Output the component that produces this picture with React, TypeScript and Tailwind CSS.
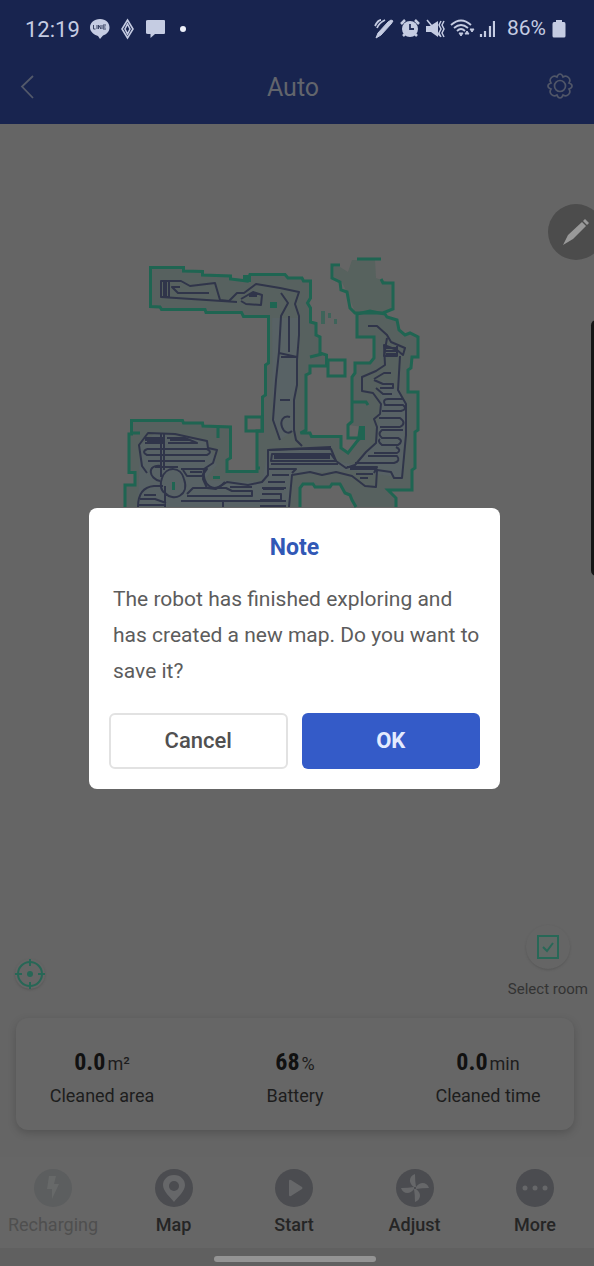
import type { ReactNode } from "react";

const FLOOR =
  "M150.500 267.500H183.500V271L202.500 271.500V275L230.500 276V279L247.500 281L250 274.500L285 274.500L288 278H302L303.500 281H310.500V298L307.500 303L310.500 308V322L316 323.500V335L320 337V353L326.500 355V366H310V373L306 375V430L300.500 433H310L311.500 436.500H341V448L348 453L356.500 442L364 438V427L348 425L352 421.500V377L355 373V363H370L374 358V337H357V314H385L387 317L397 320L399 330L405 335H418V357H412L411 368L408 370V392H418V430L415 432V468L412 470V490H388L396 498V507H355L352 500L350 495L345 493L340 484H332L330 487H315L313 484H303L300 488V507H125V485H135V472.500H129V434H131.500V420.500H182.500L183.500 423H202.500L203 426L230.500 427V458L227 460V471H256.500V431H262.500V397L265.500 395V365L268.500 363V316.500H243.500L241.500 312.500H206L205 309.500H161.500L160 307L150.500 306.500Z";

const WALLS = [
  "M356 507L352 500L350 495L345 493L340 484H332L330 487H315L313 484H303L300 488V507",
  "M125 507V485H135V472.500H129V434H131.500V420.500H182.500L183.500 423H202.500L203 426L230.500 427V458L227 460V471.500H257V468H260M257 471V431H262.500V397L265.500 395V365L268.500 363V316.500H243.500L241.500 312.500H206L205 309.500H161.500L160 307L150.500 306.500V267.500H183.500V271L202.500 271.500V275L230.500 276V279L247.500 281L250 274.500H285L288 278H302L303.500 281H310.500V298L307.500 303L310.500 308V322L316 323.500V335L320 337V353L326.500 355V366H310V373L306 375V430L300.500 433H310L311.500 436.500H341V448L348 453L356.500 442L360 438H348V425L352 421.500V377L355 373V363H370L374 358V337H357V314L370 311L385 314L387 317L397 320L399 330L405 335L410 333L418 337V357H412L411 368L408 370V392H418V430L415 432V468L412 470V490H388L396 498V507",
  "M131.500 433H140M218 427V438M352 402H366L368 405",
  "M340 265H332V278L340 282L341 290L347 292L350 308L355 313H383L393 309V283H383L381 279",
  "M357 259H381",
  "M328 360H345V376H328ZM246 417H262V431H246ZM310 357L322 354",
];

const TRACKS = [
  "M161 281H169V297H161ZM164 281V297M166 281V297",
  "M162 281L181 281L190 286L215 283L220 300L229 301L237 293L244 293L256 284L280 288L299 292L295 304L299 316V335L297 360L297 385L294 400V430L296 440L302 446",
  "M161 297L237 302M241 301L246 304L261 305L262 295L253 292L241 299M249 296H257M250 294H258M209 293H178L172 287L180 287",
  "M281 293L288 303L281 316L279 352L276 380L273 420L280 440M289 316V352M279 353L297 357M281 357H296M280 400H290M290 417C283 415 280 421 282 427C284 433 289 434 292 431",
  "M368 326H377L387 335L391 342L405 348L403 355L397 350L384 345L385 365L376 371L362 377V391L373 393L381 404L380 414L374 419L377 427L376 443L366 452L355 465L346 468L336 461L331 449H300L268 450V475L262 482L248 485L227 482L216 489L207 488L203 479L204 469L213 463L217 450L208 448L207 441L193 438L175 434L148 433L139 445L142 466L147 473",
  "M387 338L384 356H397V346M384 348H398M385 351H398M386 354H398M400 356L398 390L406 404V435L402 478H394L391 472L377 470L376 487L365 486L352 476L336 472L322 475L310 472L292 475L289 507",
  "M374 379L384 373H391M374 380L383 384H393V388H380M376 388L383 394H392M403 399H388Q382 399 385 405H403Q408 409 401 411H382M379 418H400Q407 423 400 427H380M403 430H382Q377 434 382 438H398Q404 441 398 445H382Q377 441 380 439M374 453H397Q402 450 396 447M368 456H397Q401 461 394 463H355M350 469H376M356 474H373M360 478H368M347 467H377L374 473",
  "M272 454H331L336 461H271ZM274 456H330M274 458H330M271 464H338M269 469H296L292 473M272 475H289M268 482H285M262 488H286M262 494H281V500H260M260 506H286M268 450L331 447",
  "M145 438H163V443H145M145 440H162M147 442H162M161 433V477M164 433V470M167 438H185L197 443H168M170 440H190M147 449H207Q213 452 207 455H147Q141 452 147 449M148 461H205M155 467H178M181 469H207L202 476H187L183 470M190 472H202",
  "M161 466C146 464 149 479 160 481M162 478C166 466 181 466 184 479C190 496 173 502 165 493C160 490 160 483 162 478M204 469C202 486 214 494 225 482M138 507C138 494 143 487 154 486H163M140 499H155L166 503M144 495H156M138 505H164M165 486V507",
  "M187 494L193 488H226L232 491H252V496H187M181 501H286M223 501V507M230 487H252M263 489H284",
];

function Pin({ children, faded = false }: { children: ReactNode; faded?: boolean }) {
  return (
    <svg viewBox="0 0 38 38" className={faded ? "size-[38px] text-[#5c5e5f]" : "size-[38px] text-[#4b4c50]"} aria-hidden="true">
      <circle cx="19" cy="19" r="19" fill="currentColor" />
      {children}
    </svg>
  );
}

function StatusBar() {
  return (
    <div className="flex h-[58px] items-center justify-between pr-7 pl-[25px] text-[#c5cce2]">
      <div className="flex items-center">
        <span className="text-[22px]">12:19</span>
        <svg viewBox="0 0 100 24" className="ml-2 h-6 w-[100px]" aria-hidden="true">
          <path d="M12 2C6 2 2 6 2 10.500C2 15.500 7 18 10 19L12 22L15 18.500C18 17.500 21.500 15 21.500 10.500C21.500 6 18 2 12 2Z" fill="currentColor" />
          <path d="M5.500 8V12H7.500M9 8V12M10.500 12V8L13 12V8M18 8H15V12H18M15 10H17.500" stroke="#3b4565" strokeWidth="1" fill="none" />
          <path d="M39.500 3L45 12L39.500 21L34 12ZM39.500 7L42 12L39.500 17L37 12Z" stroke="currentColor" strokeWidth="1.600" fill="none" />
          <path d="M60 3H76Q77 3 77 4V16Q77 17 76 17H67L62.500 21V17H60Q58 17 58 16V4Q58 3 60 3Z" fill="currentColor" />
          <circle cx="95" cy="12" r="3" fill="#eef1fa" />
        </svg>
      </div>
      <div className="flex items-center">
        <svg viewBox="0 0 122 24" className="h-6 w-[122px]" aria-hidden="true" fill="none" stroke="currentColor">
          <path d="M3 21L5 16L15 5L18 3L20 4L18 7L8 18Z" fill="currentColor" />
          <path d="M2 9Q5 3 8 3M4 11Q6 6 12 3" strokeWidth="1.800" />
          <path d="M30 19L32 17M44 19L42 17M28 7L32 3M46 7L42 3" strokeWidth="2.500" />
          <circle cx="37" cy="12" r="8" fill="currentColor" stroke="none" />
          <path d="M37 7V12H41" stroke="#26325c" strokeWidth="1.800" />
          <path d="M53 9H57L65 4V20L58 15H53Z" fill="currentColor" stroke="none" />
          <path d="M54 3L67 19" strokeWidth="1.500" />
          <path d="M68 4L66 8L68 12L66 16L68 20M71 4L69 8L71 12L69 16L71 20" strokeWidth="1.500" />
          <path d="M78 8Q88 -1 98 8M81 11Q88 5 95 11M84 14Q88 10 92 14" strokeWidth="1.800" />
          <path d="M86 16L88 19L90 16Z" fill="currentColor" strokeWidth="1" />
          <path d="M92 17L94 14L96 17ZM97 12H101L99 15Z" fill="currentColor" strokeWidth="1" />
          <path d="M108 20V17M112 20V14M117 20V9M121 20V4" strokeWidth="2.200" />
        </svg>
        <span className="ml-3 text-[21px]">86%</span>
        <svg viewBox="0 0 14 20" className="ml-1.5 h-5 w-3.5" aria-hidden="true">
          <path d="M4 1H10V3H12Q13.500 3 13.500 5V17Q13.500 18.500 12 18.500H2Q.5 18.500 .5 17V5Q.5 3 2 3H4Z" fill="currentColor" />
        </svg>
      </div>
    </div>
  );
}

function TitleBar() {
  return (
    <div className="flex h-[66px] items-start justify-between pt-3 pr-5 pl-4">
      <button type="button" aria-label="Back" className="flex h-8 w-6 items-center text-[#53596a]">
        <svg viewBox="0 0 24 32" className="h-8 w-6" aria-hidden="true">
          <path d="M17 6L6 16.500L17 28" fill="none" stroke="currentColor" strokeWidth="1.800" />
        </svg>
      </button>
      <h1 className="text-[25px] leading-9 text-[#62656c]">Auto</h1>
      <button type="button" aria-label="Settings" className="flex h-8 items-center text-[#505668]">
        <svg viewBox="0 0 28 28" className="size-7" aria-hidden="true" fill="none" stroke="currentColor" strokeWidth="1.700">
          <path d="M14 2Q16 2 17 5Q20 3 22.500 5.500Q25 8 23 11Q26 12 26 14Q26 16 23 17Q25 20 22.500 22.500Q20 25 17 23Q16 26 14 26Q12 26 11 23Q8 25 5.500 22.500Q3 20 5 17Q2 16 2 14Q2 12 5 11Q3 8 5.500 5.500Q8 3 11 5Q12 2 14 2Z" />
          <circle cx="14" cy="14" r="5.500" />
        </svg>
      </button>
    </div>
  );
}

function FloorMap() {
  return (
    <svg viewBox="0 124 594 384" className="block w-full" role="img" aria-label="Explored floor map">
      <path d={FLOOR} fill="#57615f" />
      <path d="M340 267L348 272L352 260H375L376 278L393 284V308L383 312H355L347 292L341 281L334 277V267Z" fill="#57625e" />
      <path d="M272 318L299 318L297 380L294 430L280 440L273 420ZM268 450H331L336 461L355 465L377 440L382 380L398 390L406 404L402 478L350 470L292 475L288 507H138L140 445L155 433L207 441L217 465L204 480L262 482Z" fill="#586265" />
      <g fill="none" stroke="#30354a" strokeWidth="2" strokeLinejoin="round">
        {TRACKS.map((d) => <path key={d} d={d} />)}
      </g>
      <g fill="none" stroke="#1f6552" strokeWidth="3">
        {WALLS.map((d) => <path key={d} d={d} />)}
      </g>
      <g fill="#1f6552">
        <path d="M359 426H365V440H357ZM243 275H251V282H243ZM270 302H277V308H270Z" />
        <path d="M321 311H325V324H321ZM328 313H331V318H328ZM334 319H337V324H334Z" opacity=".55" />
        <path d="M172 482H175V490H172ZM213 476H220V479H213Z" />
      </g>
    </svg>
  );
}

function Stat({ value, unit, label }: { value: string; unit: string; label: string }) {
  return (
    <div className="flex w-28 flex-col items-center text-[#1d1d1d]">
      <dd className="flex items-baseline gap-0.5 leading-8">
        <span className="font-['Liberation_Sans_Narrow','Roboto_Condensed',Roboto,sans-serif] text-2xl leading-8 font-bold text-[#111]">{value}</span>
        <span className="text-lg leading-8">{unit}</span>
      </dd>
      <dt className="order-last text-lg leading-8">{label}</dt>
    </div>
  );
}

function NavItem({ label, icon, disabled = false }: { label: string; icon: ReactNode; disabled?: boolean }) {
  return (
    <button
      type="button"
      disabled={disabled}
      className="flex w-[90px] flex-col items-center gap-1.5 text-[18px] leading-6 font-medium text-[#252525] disabled:font-normal disabled:text-[#4f4f4f]"
    >
      {icon}
      {label}
    </button>
  );
}

function NoteDialog() {
  return (
    <div className="absolute inset-0 flex items-center justify-center pt-[30px] pr-[94px] pl-[89px]">
      <div role="dialog" aria-modal="true" aria-labelledby="note-title" className="w-full max-w-[420px] rounded-lg bg-white px-5 pt-6 pb-5">
        <h2 id="note-title" className="text-center text-[23px] leading-8 font-bold text-[#3158b6]">Note</h2>
        <p className="mt-[17px] pl-1 text-[21px] leading-9 text-[#5c5c5c]">
          The robot has finished exploring and has created a new map. Do you want to save it?
        </p>
        <div className="mt-6 grid grid-cols-2 gap-3.5 text-[22px] font-medium">
          <button type="button" className="h-14 rounded-md border-2 border-[#e2e2e2] text-[#505050]">Cancel</button>
          <button type="button" className="h-14 rounded-md bg-[#345bc8] font-bold text-[#e3ebff]">OK</button>
        </div>
      </div>
    </div>
  );
}

export default function App() {
  return (
    <div className="relative flex min-h-screen flex-col overflow-hidden bg-[#656565] font-[Roboto,sans-serif]">
      <header className="bg-[#18244f]">
        <StatusBar />
        <TitleBar />
      </header>

      <main className="flex flex-1 flex-col">
        <FloorMap />
        <div className="mt-auto flex items-end justify-between pr-1.5 pl-[15px]">
          <button type="button" aria-label="Centre map" className="mb-3 rounded-full text-[#276756] shadow-sm">
            <svg viewBox="0 0 30 30" className="size-[30px]" aria-hidden="true" fill="none" stroke="currentColor" strokeWidth="2">
              <circle cx="15" cy="15" r="12" />
              <path d="M15 0V7M15 23V30M0 15H7M23 15H30" />
              <circle cx="15" cy="15" r="3" fill="currentColor" stroke="none" />
            </svg>
          </button>
          <button type="button" className="flex flex-col items-center gap-2 text-[15px] leading-6 text-[#333]">
            <span className="flex size-11 items-center justify-center rounded-full shadow-sm">
              <svg viewBox="0 0 24 24" className="size-6" aria-hidden="true" fill="none" stroke="#286857" strokeWidth="2">
                <path d="M2 1H22V23H2Z" fill="#616966" />
                <path d="M7 12L11 16L17 8" />
              </svg>
            </span>
            Select room
          </button>
        </div>

        <dl className="mx-4 mt-[17px] mr-5 flex h-28 items-center justify-between rounded-xl bg-[#666] px-[30px] pt-2.5 shadow-[0_3px_8px_rgba(0,0,0,0.18)]">
          <Stat value="0.0" unit="m²" label="Cleaned area" />
          <Stat value="68" unit="%" label="Battery" />
          <Stat value="0.0" unit="min" label="Cleaned time" />
        </dl>
      </main>

      <nav className="mt-[27px] flex h-[91px] justify-between bg-[#666] pt-3 pr-3.5 pl-2">
        <NavItem label="Recharging" disabled icon={<Pin faded><path d="M15 7H22L20 15H25L18 30V20H13Z" fill="#676969" /></Pin>} />
        <NavItem
          label="Map"
          icon={
            <Pin>
              <path d="M19 6C12 6 8 11 8 16C8 22 15 28 19 33C23 28 30 22 30 16C30 11 26 6 19 6Z" fill="#666769" />
              <circle cx="19" cy="17" r="5" fill="currentColor" />
            </Pin>
          }
        />
        <NavItem label="Start" icon={<Pin><path d="M14 12Q14 10 16 11L27 18Q28 19 27 20L16 27Q14 28 14 26Z" fill="#666769" /></Pin>} />
        <NavItem
          label="Adjust"
          icon={
            <Pin>
              <g fill="#666769">
                <path d="M18 18C12 14 13 7 19 5Q19 12 20 18Z" />
                <path d="M18 18C12 14 13 7 19 5Q19 12 20 18Z" transform="rotate(90 19 19)" />
                <path d="M18 18C12 14 13 7 19 5Q19 12 20 18Z" transform="rotate(180 19 19)" />
                <path d="M18 18C12 14 13 7 19 5Q19 12 20 18Z" transform="rotate(270 19 19)" />
              </g>
            </Pin>
          }
        />
        <NavItem label="More" icon={<Pin><g fill="#666769"><circle cx="9" cy="19" r="2.500" /><circle cx="19" cy="19" r="2.500" /><circle cx="29" cy="19" r="2.500" /></g></Pin>} />
      </nav>
      <div className="flex h-[18px] items-center justify-center bg-[#606060] pt-1 pr-1">
        <div className="h-1.5 w-[162px] rounded-full bg-[#949494]" />
      </div>

      <button type="button" aria-label="Edit map" className="absolute top-[204px] -right-2.5 size-14 rounded-full bg-[#4c4c4c]">
        <svg viewBox="0 0 56 56" className="size-14" aria-hidden="true" fill="#999">
          <path d="M15 41L20 31L34 18L38 22L25 35Z M35 17L37 15L41 19L39 21Z" />
        </svg>
      </button>
      <div className="absolute top-80 -right-2 h-64 w-[11px] rounded-md bg-[#151515]" />

      <NoteDialog />
    </div>
  );
}
